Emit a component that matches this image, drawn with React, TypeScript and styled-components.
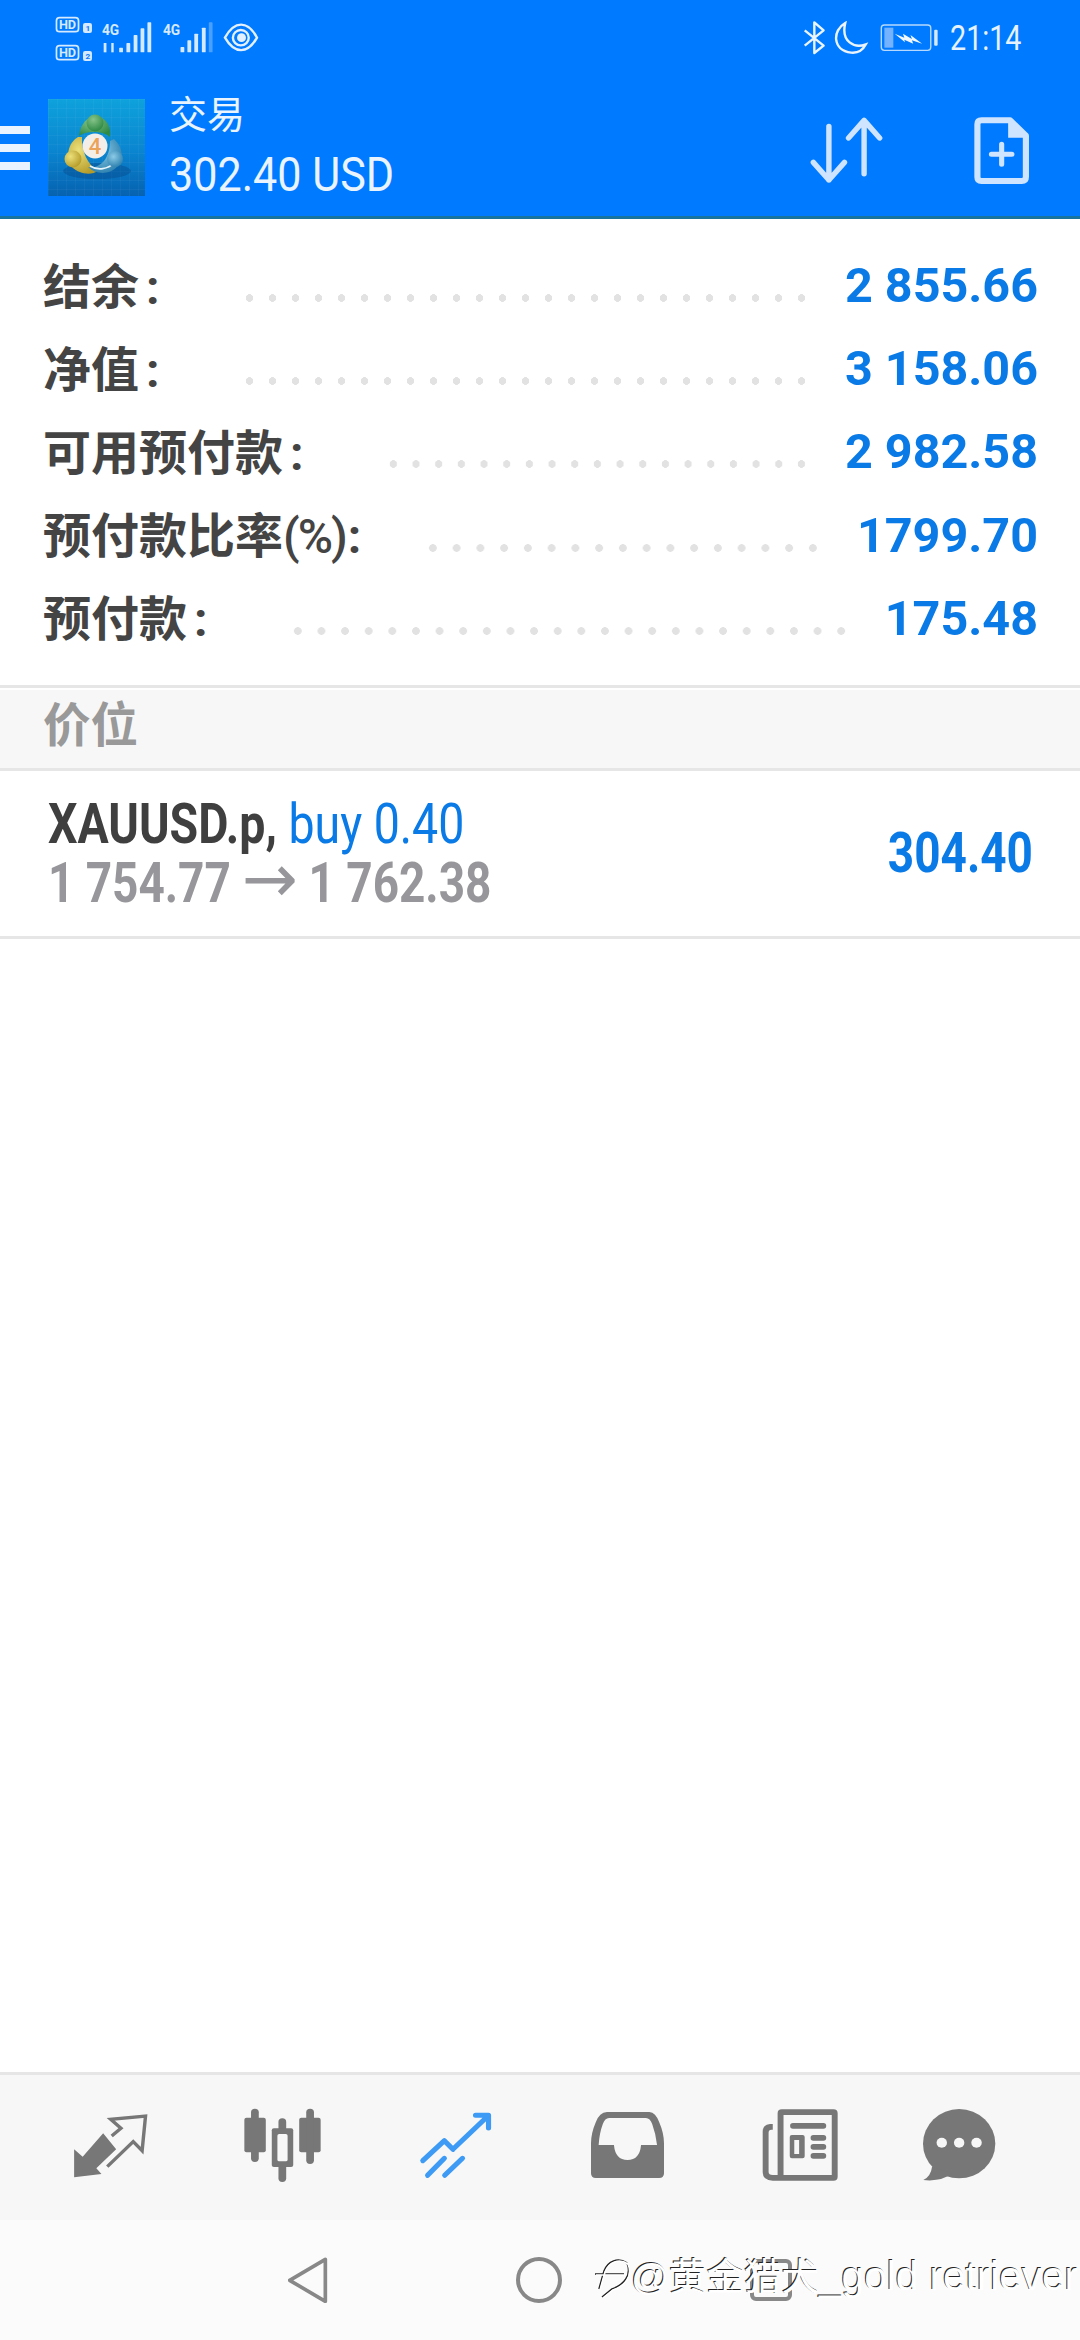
import React from "react";
import styled, { createGlobalStyle } from "styled-components";

const GlobalStyle = createGlobalStyle`
  html, body {
    margin: 0;
    padding: 0;
    background: #fff;
  }
  body {
    font-family: Roboto, "Noto Sans CJK SC", sans-serif;
  }
`;

const accounts = [
  { label: "结余", value: "2 855.66" },
  { label: "净值", value: "3 158.06" },
  { label: "可用预付款", value: "2 982.58" },
  { label: "预付款比率", suffix: "(%)", value: "1799.70" },
  { label: "预付款", value: "175.48" },
];

const App = () => {
  return (
    <Page>
      <GlobalStyle />
      <Header>
        <StatusBar>
          <StatusLeft />
          <StatusRight>
            <StatusIcons />
            <Clock>21:14</Clock>
          </StatusRight>
        </StatusBar>
        <Toolbar>
          <Burger>
            <i />
            <i />
            <i />
          </Burger>
          <Logo />
          <TitleBox>
            <Title>交易</Title>
            <Profit>302.40 USD</Profit>
          </TitleBox>
          <Actions>
            <SortIcon />
            <NewDocIcon />
          </Actions>
        </Toolbar>
      </Header>

      <Summary>
        {accounts.map((a) => (
          <SummaryRow key={a.label}>
            <Label $tight={!!a.suffix}>
              {a.label}
              {a.suffix && <Suffix>{a.suffix}</Suffix>}
              <Colon $tight={!!a.suffix}>:</Colon>
            </Label>
            <Dots />
            <Value>{a.value}</Value>
          </SummaryRow>
        ))}
      </Summary>

      <SectionTitle>价位</SectionTitle>

      <Position>
        <PositionInfo>
          <PositionTop>
            <b>XAUUSD.p,</b> <span>buy 0.40</span>
          </PositionTop>
          <PositionPrice>
            1 754.77 <Arrow>→</Arrow> 1 762.38
          </PositionPrice>
        </PositionInfo>
        <PositionProfit>304.40</PositionProfit>
      </Position>

      <Spacer />

      <TabBar>
        <Tab>
          <QuotesIcon />
        </Tab>
        <Tab>
          <ChartIcon />
        </Tab>
        <Tab>
          <TradeIcon />
        </Tab>
        <Tab>
          <InboxIcon />
        </Tab>
        <Tab>
          <NewsIcon />
        </Tab>
        <Tab $last>
          <ChatIcon />
        </Tab>
      </TabBar>

      <NavBar>
        <svg width="40" height="46" viewBox="838 590 120 138">
          <path d="M950 597 L843 660 L950 723 Z" fill="none" stroke="#888" strokeWidth="11" strokeLinejoin="round" />
        </svg>
        <svg width="46" height="46" viewBox="0 0 46 46">
          <circle cx="23" cy="23" r="21" fill="none" stroke="#888" strokeWidth="4" />
        </svg>
        <svg width="42" height="42" viewBox="0 0 42 42">
          <rect x="2" y="2" width="38" height="38" rx="4" fill="none" stroke="#888" strokeWidth="4" />
        </svg>
        <Watermark>
          <svg width="36" height="48" viewBox="0 0 36 48">
            <path
              d="M33 10 C24 4 14 8 10 18 L5 36 M1 21 H30 M33 10 C38 22 30 32 18 36 L8 44"
              fill="none"
              stroke="#222"
              strokeWidth="1.6"
            />
            <path
              d="M34 11 C25 5 15 9 11 19 L6 37 M2 22 H31 M34 11 C39 23 31 33 19 37 L9 45"
              fill="none"
              stroke="#fff"
              strokeWidth="1.6"
            />
          </svg>
          <span>
            @黄金猎犬<WatermarkLatin>_gold retriever</WatermarkLatin>
          </span>
        </Watermark>
      </NavBar>
    </Page>
  );
};

export default App;

const StatusLeft = () => (
  <svg width="215" height="54" viewBox="150 44 624 162" preserveAspectRatio="none" style={{ display: "block" }}>
    <g fill="none" stroke="#d5e9ff" strokeWidth="5">
      <rect x="163" y="52" width="64" height="42" rx="9" />
      <rect x="163" y="136" width="64" height="42" rx="9" />
    </g>
    <g fill="#d5e9ff" fontFamily="Roboto, sans-serif" fontWeight="700">
      <text x="170" y="87" fontSize="38" textLength="50" lengthAdjust="spacingAndGlyphs">HD</text>
      <text x="170" y="171" fontSize="38" textLength="50" lengthAdjust="spacingAndGlyphs">HD</text>
      <rect x="240" y="68" width="26" height="30" rx="6" />
      <rect x="240" y="152" width="26" height="30" rx="6" />
      <text x="295" y="105" fontSize="42" textLength="50" lengthAdjust="spacingAndGlyphs">4G</text>
      <text x="472" y="105" fontSize="42" textLength="50" lengthAdjust="spacingAndGlyphs">4G</text>
      <rect x="300" y="128" width="8" height="28" />
      <rect x="322" y="128" width="7" height="28" />
      <rect x="345" y="142" width="11" height="14" rx="2" />
      <rect x="366" y="128" width="11" height="28" rx="2" />
      <rect x="387" y="104" width="11" height="52" rx="2" />
      <rect x="407" y="84" width="11" height="72" rx="2" />
      <rect x="427" y="66" width="11" height="90" rx="2" />
      <rect x="523" y="140" width="11" height="16" rx="2" />
      <rect x="543" y="120" width="11" height="36" rx="2" />
      <rect x="563" y="100" width="11" height="56" rx="2" />
      <rect x="585" y="82" width="11" height="74" rx="2" />
      <rect x="605" y="66" width="11" height="90" rx="2" opacity="0.35" />
    </g>
    <g fill="#0a79ff" fontWeight="700" fontSize="24" fontFamily="Roboto, sans-serif">
      <text x="247" y="92">1</text>
      <text x="247" y="176">2</text>
    </g>
    <path d="M652 112 C680 60 718 60 745 112 C718 162 680 162 652 112 Z" fill="none" stroke="#e3f0ff" strokeWidth="7" />
    <circle cx="698" cy="112" r="23" fill="none" stroke="#e3f0ff" strokeWidth="7" />
    <circle cx="700" cy="112" r="13" fill="#e3f0ff" />
  </svg>
);

const StatusIcons = () => (
  <svg width="136" height="36" viewBox="765 62 396 108" preserveAspectRatio="none" style={{ display: "block" }}>
    <path d="M770 90 L825 136 L798 158 V66 L825 90 L770 136" fill="none" stroke="#eaf4ff" strokeWidth="7" strokeLinejoin="round" />
    <path
      d="M888 68 C850 90 850 150 905 157 C925 159 940 148 948 132 C915 145 875 125 888 68 Z"
      fill="none"
      stroke="#eaf4ff"
      strokeWidth="7"
    />
    <rect x="993" y="74" width="144" height="76" rx="9" fill="none" stroke="#b6d9ff" strokeWidth="4" />
    <rect x="1002" y="82" width="26" height="60" fill="#75b2ff" />
    <rect x="1147" y="88" width="10" height="48" rx="3" fill="#d5e9ff" />
    <path d="M1032 100 L1060 112 L1056 100 L1082 116 L1078 104 L1112 130 L1082 120 L1086 130 L1060 118 L1062 126 Z" fill="#f2f8ff" />
  </svg>
);

const Logo = () => (
  <svg width="97" height="97" viewBox="0 0 97 97" style={{ display: "block", flex: "none" }}>
    <defs>
      <linearGradient id="mtBg" x1="0" y1="0" x2="0" y2="1">
        <stop offset="0" stopColor="#0ea2dc" />
        <stop offset="0.55" stopColor="#0a84cf" />
        <stop offset="1" stopColor="#0662b0" />
      </linearGradient>
      <radialGradient id="mtGreen" cx="0.4" cy="0.3" r="0.7">
        <stop offset="0" stopColor="#86c48a" />
        <stop offset="1" stopColor="#2f8a45" />
      </radialGradient>
      <radialGradient id="mtYellow" cx="0.35" cy="0.35" r="0.7">
        <stop offset="0" stopColor="#ece07a" />
        <stop offset="1" stopColor="#b59c2a" />
      </radialGradient>
      <radialGradient id="mtBlue" cx="0.4" cy="0.35" r="0.7">
        <stop offset="0" stopColor="#8ccbe6" />
        <stop offset="1" stopColor="#2b7fae" />
      </radialGradient>
      <pattern id="mtGrid" width="9" height="9" patternUnits="userSpaceOnUse">
        <path d="M9 0 H0 V9" fill="none" stroke="#ffffff" strokeOpacity="0.07" strokeWidth="1" />
      </pattern>
    </defs>
    <rect width="97" height="97" fill="url(#mtBg)" />
    <rect width="97" height="97" fill="url(#mtGrid)" />
    <ellipse cx="49" cy="72" rx="34" ry="8" fill="#063f7d" opacity="0.35" />
    <path d="M31 37 C32 25 40 17 47 17 C56 17 64 26 62 38 C56 32 38 31 31 37 Z" fill="url(#mtGreen)" />
    <path d="M30 38 C20 44 17 58 24 68 C32 76 44 76 50 72 C40 66 33 52 34 38 Z" fill="url(#mtYellow)" />
    <path d="M66 40 C75 48 76 60 70 67 C62 76 48 76 40 68 C50 70 62 62 62 42 Z" fill="url(#mtBlue)" />
    <path d="M42 67 C50 72 60 70 66 64" fill="none" stroke="#e6f4fb" strokeWidth="1.6" />
    <circle cx="47" cy="24" r="8.5" fill="url(#mtGreen)" />
    <circle cx="25" cy="60" r="8.5" fill="url(#mtYellow)" />
    <circle cx="67" cy="60" r="8" fill="url(#mtBlue)" />
    <circle cx="47" cy="47" r="12.5" fill="#f4eee8" />
    <LogoDigit x="47" y="54.5">4</LogoDigit>
  </svg>
);

const SortIcon = () => (
  <svg width="75" height="67" viewBox="778 342 220 198">
    <path
      d="M836 370 V528 M790 476 L836 528 L882 476 M940 510 V352 M894 404 L940 352 L986 404"
      fill="none"
      stroke="#cfe4ff"
      strokeWidth="16"
      strokeLinecap="round"
      strokeLinejoin="round"
    />
  </svg>
);

const NewDocIcon = () => (
  <svg width="56" height="68" viewBox="1260 340 164 204" preserveAspectRatio="none">
    <path
      d="M1282 350 H1366 L1412 396 V520 Q1412 532 1400 532 H1282 Q1270 532 1270 520 V362 Q1270 350 1282 350 Z"
      fill="none"
      stroke="#cfe4ff"
      strokeWidth="18"
      strokeLinejoin="round"
    />
    <path d="M1360 346 L1416 402 H1360 Z" fill="#cfe4ff" />
    <path d="M1341 422 V482 M1311 452 H1371" stroke="#cfe4ff" strokeWidth="15" strokeLinecap="round" />
  </svg>
);

const QuotesIcon = () => (
  <svg width="82" height="70" viewBox="200 150 240 210" preserveAspectRatio="none">
    <path d="M215 268 V352 L295 342 L280 325 L338 268 L300 220 L240 290 Z" fill="#777" />
    <path
      d="M325 228 L352 205 L322 178 L424 168 L414 272 L388 245 L312 320"
      fill="none"
      stroke="#777"
      strokeWidth="10"
    />
  </svg>
);

const ChartIcon = () => (
  <svg width="77" height="74" viewBox="708 146 219 222" preserveAspectRatio="none">
    <g fill="#777">
      <rect x="709" y="175" width="61" height="104" rx="6" />
      <rect x="728" y="148" width="22" height="160" rx="11" />
      <rect x="865" y="175" width="61" height="104" rx="6" />
      <rect x="885" y="148" width="22" height="166" rx="11" />
      <rect x="806" y="177" width="22" height="191" rx="11" />
      <rect x="787" y="207" width="61" height="116" rx="6" />
    </g>
    <rect x="803" y="224" width="29" height="82" rx="5" fill="#f7f7f7" />
  </svg>
);

const TradeIcon = () => (
  <svg width="77" height="70" viewBox="1205 150 225 210" preserveAspectRatio="none">
    <path
      d="M1222 302 L1285 242 L1310 268 L1410 170 M1376 166 H1414 V204 M1236 346 L1285 295 M1286 346 L1338 295"
      fill="none"
      stroke="#3d9bf5"
      strokeWidth="15"
      strokeLinecap="round"
      strokeLinejoin="round"
    />
  </svg>
);

const InboxIcon = () => (
  <svg width="73" height="66" viewBox="146 156 210 198" preserveAspectRatio="none">
    <path
      fillRule="evenodd"
      d="M192 156 H314 Q332 158 342 186 Q356 220 356 250 V340 Q356 354 342 354 H160 Q146 354 146 340 V250 Q146 220 160 186 Q170 158 192 156 Z M198 174 Q186 174 180 192 Q170 220 168 255 H212 Q216 300 251 300 Q286 300 290 255 H336 Q332 220 322 192 Q316 174 304 174 Z"
      fill="#777"
    />
  </svg>
);

const NewsIcon = () => (
  <svg width="76" height="72" viewBox="645 147 219 216" preserveAspectRatio="none">
    <path
      fillRule="evenodd"
      d="M702 148 H851 Q863 148 863 160 V350 Q863 362 851 362 H676 Q647 362 647 336 V214 Q647 194 668 192 H676 V209 H672 Q664 209 664 218 V336 Q664 345 676 345 H690 V160 Q690 148 702 148 Z M707 165 V345 H846 V165 Z"
      fill="#777"
    />
    <g fill="#777">
      <rect x="726" y="189" width="104" height="17" rx="8" />
      <rect x="785" y="225" width="45" height="17" rx="8" />
      <rect x="785" y="252" width="45" height="17" rx="8" />
      <rect x="785" y="279" width="45" height="17" rx="8" />
      <path
        fillRule="evenodd"
        d="M731 225 H762 Q768 225 768 231 V289 Q768 295 762 295 H731 Q725 295 725 289 V231 Q725 225 731 225 Z M738 240 V282 H752 V240 Z"
      />
    </g>
  </svg>
);

const ChatIcon = () => (
  <svg width="73" height="72" viewBox="1109 147 210 216" preserveAspectRatio="none">
    <circle cx="1213" cy="251" r="104" fill="#777" />
    <path d="M1135 320 Q1132 348 1110 360 Q1160 366 1195 340 Z" fill="#777" />
    <g fill="#f7f7f7">
      <circle cx="1163" cy="248" r="15" />
      <circle cx="1213" cy="248" r="15" />
      <circle cx="1263" cy="248" r="15" />
    </g>
  </svg>
);

const Page = styled.div`
  display: flex;
  flex-direction: column;
  width: 1080px;
  height: 2340px;
  overflow: hidden;
  background: #fff;
`;

const Header = styled.header`
  display: flex;
  flex-direction: column;
  height: 216px;
  background: #007aff;
  border-bottom: 3px solid #17749f;
  flex: none;
`;

const StatusBar = styled.div`
  display: flex;
  justify-content: space-between;
  align-items: flex-start;
  height: 99px;
  padding: 15px 43px 0 52px;
  box-sizing: border-box;
`;

const StatusRight = styled.div`
  display: flex;
  align-items: center;
  margin-top: 6px;
`;

const Clock = styled.span`
  display: inline-block;
  font-size: 35px;
  line-height: 36px;
  color: #e6f2ff;
  transform: scaleX(0.82);
  transform-origin: left center;
  margin-left: 11px;
  white-space: nowrap;
`;

const Toolbar = styled.div`
  display: flex;
  align-items: center;
  height: 97px;
`;

const Burger = styled.div`
  display: flex;
  flex-direction: column;
  gap: 10px;
  width: 30px;
  margin-right: 18px;
  flex: none;

  i {
    display: block;
    height: 8px;
    background: #e8f3ff;
  }
`;

const LogoDigit = styled.text`
  font-family: Roboto, sans-serif;
  font-size: 22px;
  font-weight: 500;
  fill: #eba35a;
  text-anchor: middle;
`;

const TitleBox = styled.div`
  display: flex;
  flex-direction: column;
  margin: -4px 0 0 24px;
  flex: 1;
`;

const Title = styled.div`
  font-family: "Noto Sans CJK SC", sans-serif;
  font-size: 38px;
  line-height: 44px;
  color: #e9f4ff;
`;

const Profit = styled.div`
  font-size: 49px;
  line-height: 54px;
  margin-top: 14px;
  color: #e9f4ff;
  transform: scaleX(0.88);
  transform-origin: left center;
  white-space: nowrap;
`;

const Actions = styled.div`
  display: flex;
  align-items: center;
  gap: 90px;
  padding-right: 50px;
  margin-top: 6px;
`;

const Summary = styled.section`
  display: flex;
  flex-direction: column;
  padding: 24px 0 26px 43px;
  border-bottom: 3px solid #e6e6e6;
  flex: none;
`;

const SummaryRow = styled.div`
  display: flex;
  align-items: center;
  height: 83.2px;
  padding-right: 42px;
`;

const Label = styled.div<{ $tight?: boolean }>`
  font-family: "Noto Sans CJK SC", sans-serif;
  font-size: 48px;
  font-weight: 700;
  color: #444;
  white-space: nowrap;
  padding-bottom: 4px;
  margin-right: ${({ $tight }) => ($tight ? "60px" : "78px")};
`;

const Suffix = styled.span`
  font-family: Roboto, sans-serif;
  font-weight: 500;
  letter-spacing: -2px;
`;

const Colon = styled.span<{ $tight?: boolean }>`
  font-family: Roboto, sans-serif;
  margin-left: ${({ $tight }) => ($tight ? "2px" : "7px")};
`;

const Dots = styled.div`
  flex: 1;
  align-self: stretch;
  margin: 0 32px 0 0;
  background-image: radial-gradient(circle, #e2e2e2 3.6px, transparent 4px);
  background-size: 23.25px 8px;
  background-repeat: round no-repeat;
  background-position: left 0 top 51px;
`;

const Value = styled.div`
  font-size: 48.5px;
  font-weight: 700;
  color: #0a7ae6;
  white-space: nowrap;
  padding-top: 2px;
`;

const SectionTitle = styled.div`
  display: flex;
  align-items: center;
  height: 64px;
  margin-top: 2px;
  padding: 0 0 14px 43px;
  background: #f7f7f7;
  border-bottom: 3px solid #e6e6e6;
  font-family: "Noto Sans CJK SC", sans-serif;
  font-size: 47.5px;
  font-weight: 700;
  color: #999;
  flex: none;
`;

const Position = styled.section`
  display: flex;
  align-items: center;
  justify-content: space-between;
  height: 165px;
  padding: 0 47px 0 48px;
  border-bottom: 3px solid #e6e6e6;
  flex: none;
`;

const PositionInfo = styled.div`
  display: flex;
  flex-direction: column;
`;

const PositionTop = styled.div`
  font-size: 56px;
  line-height: 60px;
  color: #0a7ae6;
  transform: scaleX(0.83);
  transform-origin: left center;
  white-space: nowrap;

  b {
    color: #3f3f3f;
    font-weight: 700;
  }
`;

const PositionPrice = styled.div`
  font-size: 56px;
  line-height: 58px;
  font-weight: 700;
  color: #97979b;
  transform: scaleX(0.82);
  transform-origin: left center;
  white-space: nowrap;
`;

const Arrow = styled.span`
  display: inline-block;
  font-family: "DejaVu Sans", sans-serif;
  font-size: 68px;
  font-weight: 400;
  line-height: 40px;
  transform: scaleX(1.2);
  margin: 0 5px;
`;

const PositionProfit = styled.div`
  font-size: 56px;
  font-weight: 700;
  color: #0a7ae6;
  transform: scaleX(0.82);
  transform-origin: right center;
`;

const Spacer = styled.div`
  flex: 1;
`;

const TabBar = styled.nav`
  display: grid;
  grid-template-columns: repeat(6, 172.5px);
  align-items: center;
  height: 145px;
  padding-left: 24px;
  background: #f7f7f7;
  border-top: 3px solid #e6e6e6;
  flex: none;
`;

const Tab = styled.div<{ $last?: boolean }>`
  display: flex;
  justify-content: center;
  align-items: center;
  margin-top: -6px;
  padding-right: ${({ $last }) => ($last ? "27px" : "0")};
`;

const NavBar = styled.div`
  position: relative;
  display: flex;
  align-items: center;
  justify-content: center;
  gap: 188px;
  height: 120px;
  background: #fbfbfb;
  flex: none;
`;

const Watermark = styled.div`
  position: absolute;
  left: 594px;
  top: 32px;
  display: flex;
  align-items: center;
  gap: 1px;
  font-family: "Liberation Sans", "Noto Sans CJK SC", sans-serif;
  font-size: 37.5px;
  line-height: 48px;
  color: #fff;
  text-shadow: -1px -1px 0 #222;
  white-space: nowrap;
`;

const WatermarkLatin = styled.span`
  font-size: 40.5px;
`;
